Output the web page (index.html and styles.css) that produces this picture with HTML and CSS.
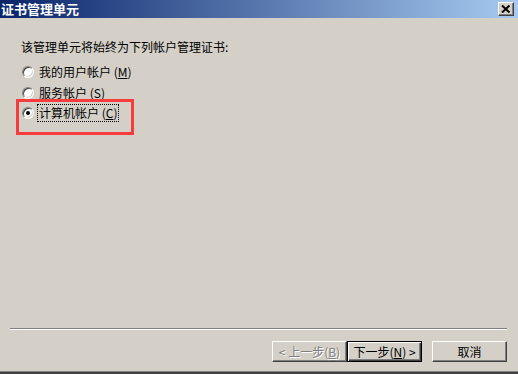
FILE: index.html
```html
<!DOCTYPE html>
<html lang="zh-CN">
<head>
    <meta charset="UTF-8">
    <title>证书管理单元</title>
    <link rel="stylesheet" href="styles.css">
</head>
<body>
    <div class="window">
        <div class="titlebar">
            <span class="title">证书管理单元</span>
            <button class="close-btn" aria-label="关闭">
                <svg width="10" height="8" viewBox="0 0 10 8">
                    <path d="M1 0.5L8.5 7.5M8.5 0.5L1 7.5" stroke="#000" stroke-width="2" fill="none"/>
                </svg>
            </button>
        </div>

        <div class="content">
            <p class="intro">该管理单元将始终为下列帐户管理证书:</p>
            <div class="options">
                <label class="option">
                    <span class="radio"></span>
                    <span class="option-text">我的用户帐户 (<u>M</u>)</span>
                </label>
                <label class="option">
                    <span class="radio"></span>
                    <span class="option-text">服务帐户 (<u>S</u>)</span>
                </label>
                <label class="option">
                    <span class="radio checked"></span>
                    <span class="option-text focused">计算机帐户 (<u>C</u>)</span>
                </label>
            </div>
            <!-- annotation box drawn over the selected option -->
            <div class="highlight"></div>
        </div>

        <div class="footer">
            <div class="separator"></div>
            <div class="buttons">
                <button class="btn" disabled>&lt; 上一步(<u>B</u>)</button>
                <button class="btn default">下一步(<u>N</u>) &gt;</button>
                <button class="btn cancel">取消</button>
            </div>
        </div>
    </div>
</body>
</html>
```

FILE: styles.css
```css
:root {
    --face: #d4d0c8;
    --shadow: #808080;
    --dark: #404040;
    --light: #ffffff;
    --ui-font: "Noto Sans CJK SC", "Liberation Sans", sans-serif;
}

* {
    box-sizing: border-box;
}

body {
    margin: 0;
    overflow: hidden;
    font-family: var(--ui-font);
    font-size: 12px;
    color: #000;
}

.window {
    width: 518px;
    height: 374px;
    display: flex;
    flex-direction: column;
    background: var(--face);
    border-bottom: 2px solid var(--dark);
    box-shadow: inset 0 -1px 0 var(--shadow);
}

.titlebar {
    height: 18px;
    display: flex;
    align-items: center;
    justify-content: space-between;
    padding: 0 4px 0 1px;
    background: linear-gradient(to right, #0a246a, #a6caf0);
}

.title {
    color: #fff;
    font-weight: bold;
    font-size: 13px;
    line-height: 18px;
}

.close-btn {
    width: 16px;
    height: 14px;
    padding: 0;
    display: flex;
    align-items: center;
    justify-content: center;
    background: var(--face);
    border: 1px solid;
    border-color: var(--light) var(--dark) var(--dark) var(--light);
    box-shadow: inset -1px -1px 0 var(--shadow);
}

.content {
    position: relative;
    flex: 1;
    padding: 22px 0 0 21px;
}

.intro {
    margin: 0;
    line-height: 14px;
}

.options {
    margin-top: 8px;
    padding-left: 1px;
}

.option {
    height: 20.5px;
    display: flex;
    align-items: center;
    gap: 4px;
}

.radio {
    width: 12px;
    height: 12px;
    border-radius: 50%;
    background: #fff;
    border: 1px solid;
    border-color: var(--shadow) var(--light) var(--light) var(--shadow);
    box-shadow: inset 1px 1px 0 var(--dark), inset -1px -1px 0 var(--face);
    display: flex;
    align-items: center;
    justify-content: center;
}

.radio.checked::after {
    content: "";
    width: 4px;
    height: 4px;
    border-radius: 50%;
    background: #000;
}

.option-text {
    line-height: 14px;
    padding: 1px;
}

.option-text.focused {
    outline: 1px dotted #000;
}

.highlight {
    position: absolute;
    left: 16px;
    top: 81px;
    width: 118px;
    height: 36px;
    border: 3px solid #f63c3c;
}

.footer {
    padding-bottom: 10px;
}

.separator {
    margin: 0 11px 0 10px;
    border-top: 1px solid var(--shadow);
    border-bottom: 1px solid var(--light);
}

.buttons {
    display: flex;
    justify-content: flex-end;
    padding-right: 11px;
    margin-top: 11px;
}

.btn {
    width: 75px;
    height: 21px;
    padding: 0;
    font-family: var(--ui-font);
    font-size: 12px;
    line-height: 14px;
    color: #000;
    background: var(--face);
    border: 1px solid;
    border-color: var(--light) var(--dark) var(--dark) var(--light);
    box-shadow: inset -1px -1px 0 var(--shadow);
}

.btn:disabled {
    color: var(--shadow);
    text-shadow: 1px 1px 0 var(--light);
}

.btn.default {
    border: 1px solid #000;
    box-shadow: inset 1px 1px 0 var(--light), inset -1px -1px 0 var(--dark), inset -2px -2px 0 var(--shadow);
}

.btn.cancel {
    margin-left: 10px;
}
```
